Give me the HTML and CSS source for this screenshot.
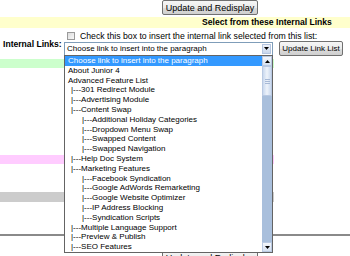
FILE: index.html
```html
<!DOCTYPE html>
<html>
<head>
<meta charset="utf-8">
<link rel="stylesheet" href="styles.css">
</head>
<body>
<div class="page">
  <div class="top-actions"><button class="btn btn-redisplay">Update and Redisplay</button></div>
  <div class="section-bar">Select from these Internal Links</div>
  <div class="link-row">
    <div class="label">Internal Links:</div>
    <div class="controls">
      <div class="check"><span class="cb"></span><span>Check this box to insert the internal link selected from this list:</span></div>
      <div class="select-row">
        <div class="select"><span class="select-text">Choose link to insert into the paragraph</span><span class="select-arrow"><svg width="5" height="3" viewBox="0 0 5 3"><path d="M0 0h5L2.5 3z" fill="#000"/></svg></span></div>
        <button class="btn btn-links">Update Link List</button>
      </div>
    </div>
  </div>
  <div class="band band-green"></div>
  <div class="band band-pink"></div>
  <div class="band band-gray"></div>
  <div class="rule"></div>
  <div class="bottom-actions"><button class="btn btn-redisplay">Update and Redisplay</button></div>

  <div class="dropdown">
    <ul class="options">
      <li class="opt selected">Choose link to insert into the paragraph</li>
      <li class="opt">About Junior 4</li>
      <li class="opt">Advanced Feature List</li>
      <li class="opt l1">|---301 Redirect Module</li>
      <li class="opt l1">|---Advertising Module</li>
      <li class="opt l1">|---Content Swap</li>
      <li class="opt l2">|---Additional Holiday Categories</li>
      <li class="opt l2">|---Dropdown Menu Swap</li>
      <li class="opt l2">|---Swapped Content</li>
      <li class="opt l2">|---Swapped Navigation</li>
      <li class="opt l1">|---Help Doc System</li>
      <li class="opt l1">|---Marketing Features</li>
      <li class="opt l2">|---Facebook Syndication</li>
      <li class="opt l2">|---Google AdWords Remarketing</li>
      <li class="opt l2">|---Google Website Optimizer</li>
      <li class="opt l2">|---IP Address Blocking</li>
      <li class="opt l2">|---Syndication Scripts</li>
      <li class="opt l1">|---Multiple Language Support</li>
      <li class="opt l1">|---Preview &amp; Publish</li>
      <li class="opt l1">|---SEO Features</li>
    </ul>
    <div class="scrollbar">
      <div class="sb-btn"><svg width="5" height="3" viewBox="0 0 5 3"><path d="M0 3h5L2.5 0z" fill="#000"/></svg></div>
      <div class="sb-thumb"><span class="grip"></span></div>
      <div class="sb-track"></div>
      <div class="sb-btn"><svg width="5" height="3" viewBox="0 0 5 3"><path d="M0 0h5L2.5 3z" fill="#000"/></svg></div>
    </div>
  </div>
</div>
</body>
</html>
```

FILE: styles.css
```css
* { box-sizing: border-box; }
html, body { margin: 0; padding: 0; }
body {
  font-family: "Liberation Sans", Arial, sans-serif;
  color: #000;
  background: #fff;
  width: 350px;
  height: 256px;
  overflow: hidden;
}
.page { position: relative; width: 350px; height: 256px; overflow: hidden; }

.btn {
  font-family: "Liberation Sans", Arial, sans-serif;
  font-size: 8px;
  color: #000;
  height: 15px;
  padding: 0;
  border: 1px solid #707070;
  border-radius: 2px;
  background: linear-gradient(#f6f6f6, #ebebeb 50%, #dddddd 51%, #cfcfcf);
  display: flex;
  align-items: center;
  justify-content: center;
  white-space: nowrap;
}

.top-actions { height: 17px; padding-left: 162px; }
.btn-redisplay { width: 96px; font-size: 9px; }

.section-bar {
  height: 11px;
  background: #ffffcc;
  font-weight: bold;
  font-size: 8.6px;
  line-height: 11px;
  padding-left: 202px;
  white-space: nowrap;
}

.link-row { display: flex; height: 29px; padding-top: 2px; }
.label {
  width: 64px;
  padding-left: 3px;
  font-weight: bold;
  font-size: 8.6px;
  display: flex;
  align-items: center;
  white-space: nowrap;
}
.controls { display: flex; flex-direction: column; }
.check {
  display: flex;
  align-items: center;
  height: 11px;
  padding-left: 3px;
  gap: 5px;
  font-size: 8.7px;
  white-space: nowrap;
}
.cb {
  width: 8px;
  height: 8px;
  border: 1px solid #9a9a9a;
  background: linear-gradient(135deg, #dcdcdc, #f8f8f8);
  flex: none;
}
.select-row { display: flex; align-items: center; gap: 6px; height: 15px; }
.select {
  width: 209px;
  height: 14px;
  border: 1px solid #7f9db9;
  display: flex;
  align-items: center;
  font-size: 8px;
  padding-left: 2px;
  padding-right: 1px;
  background: #fff;
}
.select-text { flex: 1; white-space: nowrap; }
.select-arrow {
  width: 9px;
  height: 10px;
  background: linear-gradient(#eef3fb, #c9d7ec);
  border: 1px solid #b4c5e0;
  display: flex;
  align-items: center;
  justify-content: center;
}
.btn-links { width: 64px; }

.band { height: 9px; width: 274px; }
.band-green { background: #ccffcc; margin-top: 2px; }
.band-pink { background: #ffccff; margin-top: 87px; }
.band-gray { background: #cccccc; margin-top: 28px; height: 10px; }
.rule { height: 2px; background: #8a8a8a; margin-top: 32px; }
.bottom-actions { padding-left: 162px; margin-top: 14px; }

.dropdown {
  position: absolute;
  left: 64px;
  top: 55px;
  width: 209px;
  height: 198px;
  border: 1px solid #646464;
  background: #fff;
  display: flex;
}
.options {
  list-style: none;
  margin: 0;
  padding: 0;
  flex: 1;
  font-size: 8px;
}
.opt {
  height: 9.8px;
  line-height: 9.8px;
  padding-left: 3px;
  white-space: nowrap;
  overflow: hidden;
}
.opt.l1 { padding-left: 6px; }
.opt.l2 { padding-left: 17px; }
.opt.selected { background: #3399ff; color: #fff; }

.scrollbar {
  width: 10px;
  background: #a9bfdc;
  display: flex;
  flex-direction: column;
}
.sb-btn {
  height: 10px;
  border: 1px solid #b9c9e2;
  background: linear-gradient(#f3f6fb, #d6e1f1);
  display: flex;
  align-items: center;
  justify-content: center;
}
.sb-thumb {
  height: 30px;
  border: 1px solid #b9c9e2;
  background: linear-gradient(90deg, #c9d8ee, #eef3fa 50%, #c9d8ee);
  display: flex;
  align-items: center;
  justify-content: center;
}
.grip { width: 5px; height: 5px; background: repeating-linear-gradient(#a7b9d6 0 1px, transparent 1px 2px); }
.sb-track { flex: 1; }
```
